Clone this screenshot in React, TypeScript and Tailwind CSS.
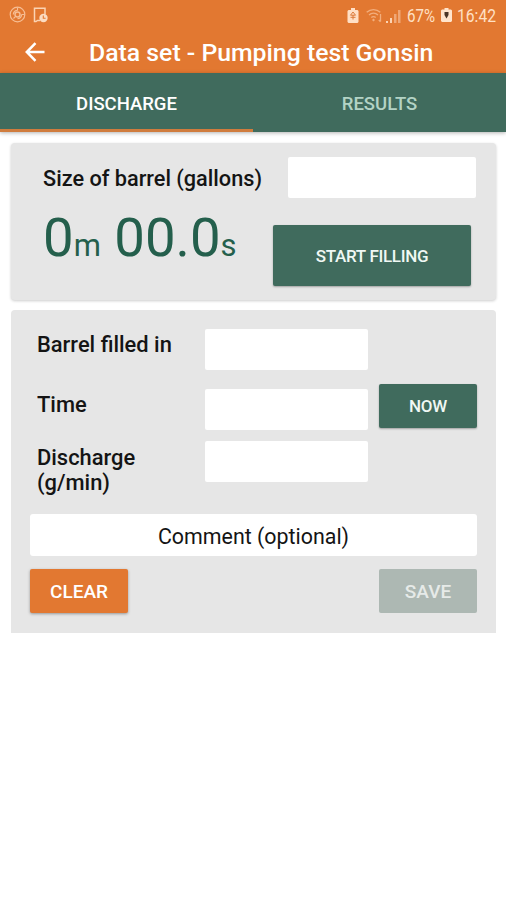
import React, { useState } from 'react';
import clsx from 'clsx';

const tabs = ['DISCHARGE', 'RESULTS'];

export default function App() {
  const [activeTab, setActiveTab] = useState('DISCHARGE');

  return (
    <div className="min-h-screen bg-white font-['Roboto',sans-serif] text-[#141414]">
      <header className="h-[73px] bg-[#e27831] text-white">
        <StatusBar />
        <div className="flex h-[42px] items-center pl-[25px]">
          <button aria-label="Back" className="shrink-0">
            <BackIcon />
          </button>
          <h1 className="ml-[44px] pt-px text-[24.800px] font-medium leading-[42px] whitespace-nowrap">Data set - Pumping test Gonsin</h1>
        </div>
      </header>

      <nav className="flex h-[59px] bg-[#406b5d] shadow-[0_1px_4px_rgba(0,0,0,0.3)]">
        {tabs.map((tab) => (
          <button
            key={tab}
            onClick={() => setActiveTab(tab)}
            className={clsx(
              'flex-1 border-b-[3px] pt-[7px] text-[18.500px] font-medium',
              activeTab === tab ? 'border-[#d07c3d] text-white' : 'border-transparent text-[#b3d3c5]',
            )}
          >
            {tab}
          </button>
        ))}
      </nav>

      <main className="flex flex-col gap-[10px] pt-[11px] pr-[10px] pl-[11px]">
        <section className="h-[157px] rounded bg-[#e6e6e6] pt-[14px] pr-[20px] pl-[32px] shadow-[0_1px_3px_rgba(0,0,0,0.2)]">
          <div className="flex h-[41px] items-center justify-between">
            <label htmlFor="size" className="pt-[3px] text-[21.700px] font-medium whitespace-nowrap">Size of barrel (gallons)</label>
            <Field id="size" className="w-[188px]" />
          </div>
          <div className="mt-[27px] flex items-start justify-between pr-[5px]">
            <p className="-mt-[21px] text-[54.500px] leading-[66px] whitespace-nowrap text-[#245f4c]">
              0<span className="text-[31px]">m</span> 00.0<span className="text-[31px]">s</span>
            </p>
            <Button className="h-[61px] w-[198px] bg-[#406b5d] text-[17px] tracking-[-0.3px] text-[#f0f8f4] shadow-[0_1px_2px_rgba(0,0,0,0.3)]">START FILLING</Button>
          </div>
        </section>

        <section className="h-[323px] rounded-t bg-[#e6e6e6] pt-[19px] pr-[19px] pl-[19px]">
          <div className="grid grid-cols-[175px_163px_98px]">
            <Label htmlFor="filled" className="pt-[3px]">Barrel filled in</Label>
            <Field id="filled" />
            <span />

            <Label htmlFor="time" className="pt-[22px]">Time</Label>
            <Field id="time" className="mt-[19px]" />
            <Button className="mt-[14px] ml-[11px] h-[44px] w-[98px] bg-[#406b5d] text-[17px] tracking-[-0.3px] text-[#f0f8f4] shadow-[0_1px_2px_rgba(0,0,0,0.3)]">NOW</Button>

            <Label htmlFor="discharge" className="pt-[15px]">
              Discharge
              <br />
              (g/min)
            </Label>
            <Field id="discharge" className="mt-[11px]" />
          </div>

          <div className="mt-[19px] h-[42px] rounded-[3px] bg-white text-center text-[21.400px] leading-[45px]">Comment (optional)</div>

          <div className="mt-[13px] flex justify-between">
            <Button className="h-[44px] w-[98px] bg-[#e27831] text-[19px] text-white shadow-[0_1px_3px_rgba(0,0,0,0.35)]">CLEAR</Button>
            <Button className="h-[44px] w-[98px] bg-[#adb8b3] text-[19px] text-[#e6eae8]">SAVE</Button>
          </div>
        </section>
      </main>
    </div>
  );
}

const Label = ({ htmlFor, className, children }: { htmlFor: string; className?: string; children: React.ReactNode }) => (
  <label htmlFor={htmlFor} className={clsx('pl-[7px] text-[21.900px] font-medium leading-[25px]', className)}>
    {children}
  </label>
);

const Field = ({ id, className }: { id: string; className?: string }) => (
  <input id={id} className={clsx('h-[41px] rounded-[2px] bg-white px-2 text-[21px] outline-none', className)} />
);

const Button = ({ className, children }: { className: string; children: React.ReactNode }) => (
  <button className={clsx('shrink-0 rounded-[2px] pt-[2px] font-medium whitespace-nowrap', className)}>{children}</button>
);

const StatusBar = () => (
  <div className="flex h-[31px] items-center justify-between pr-[10px] pl-[9px] text-[#ffe0c4]">
    <div className="flex items-center gap-[7px]">
      <svg className="-mt-[2px]" width="17" height="17" viewBox="0 0 17 17" fill="none" stroke="#f6bd93" strokeWidth="1.2">
        <circle cx="8.5" cy="8.5" r="7.3" />
        <path d="M4.300 8.500a4.200 4.200 0 0 1 4.200-4.200M12.700 8.500a4.200 4.200 0 0 1-4.200 4.200M8.500 1.500v3M12.500 8.500h3M4.500 12.500l1.600-1.600" />
        <circle cx="8.5" cy="8.500" r="2.500" strokeWidth="1.500" />
      </svg>
      <svg className="-mt-[1px]" width="15" height="16" viewBox="0 0 15 16" fill="none">
        <path d="M7 13.500H4.500L3 14.500H1.500V1.200h10.500v6" stroke="#fbd3b3" strokeWidth="1.5" />
        <circle cx="10.5" cy="11" r="4.2" fill="#fbdcc2" />
        <path d="M10.3 8.5v2.8h2.3" stroke="#e27831" strokeWidth="1.1" />
      </svg>
    </div>
    <div className="flex items-center text-[18px]">
      <svg className="mr-px" width="12" height="15" viewBox="0 0 12 15">
        <path d="M4 0h4v2h2.5l1 1v11l-1 1h-9l-1-1V3l1-1H4z" fill="#ffdfc5" />
        <path d="M6 4 3.500 7.200h5zM6 7v4.500M3.500 9.300h5" fill="none" stroke="#dc7a3a" strokeWidth="1" />
      </svg>
      <svg className="ml-[6px]" width="17" height="15" viewBox="0 0 17 15" fill="none" stroke="#f2ae7d" strokeWidth="1.3">
        <path d="M.7 4.300C4.500.600 10.500.600 14.300 4.300M3 7c2.600-2.500 6.400-2.500 9 0M5.300 9.600c1.300-1.200 3.100-1.200 4.400 0" />
        <path d="M7.500 10.500 9 12l-1.500 1.500L6 12z" fill="#f2ae7d" stroke="none" />
        <path d="M14.500 6v7.500M12.800 12l1.700 1.700" />
      </svg>
      <svg className="ml-[3px]" width="15" height="14" viewBox="0 0 15 14">
        <path d="M0 12h2v2H0zM4 9h2v5H4z" fill="#fbd3b3" />
        <path d="M8 5h2.500v9H8zM12 1h2.500v13H12z" fill="#efa777" />
      </svg>
      <span className="ml-[6px] w-[29px] whitespace-nowrap">
        <span className="inline-block origin-left scale-x-[0.84]">67%</span>
      </span>
      <svg className="-mt-[2px] ml-[5px]" width="11" height="14" viewBox="0 0 11 14">
        <path d="M3.500 0h4v1.500H10l1 1V13l-1 1H1l-1-1V2.500l1-1h2.500z" fill="#ffe4cc" />
        <path d="M3.500 4h4v3l-2 3.500L3.500 7z" fill="#4b3526" />
      </svg>
      <span className="ml-[5px] w-[39px] whitespace-nowrap">
        <span className="inline-block origin-left scale-x-[0.87]">16:42</span>
      </span>
    </div>
  </div>
);

const BackIcon = () => (
  <svg width="20" height="20" viewBox="0 0 20 20" fill="none" stroke="white" strokeWidth="2.500">
    <path d="M19.500 10H2M10.500 1.200 1.800 10l8.700 8.800" />
  </svg>
);
